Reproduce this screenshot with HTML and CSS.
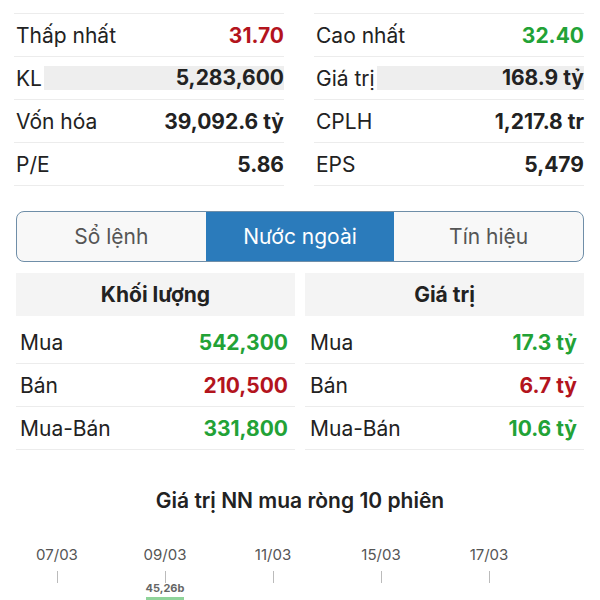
FILE: index.html
```html
<!DOCTYPE html>
<html lang="vi">
  <head>
    <meta charset="UTF-8" />
    <meta name="viewport" content="width=device-width, initial-scale=1.0" />
    <title>Thông tin cổ phiếu</title>
    <link rel="stylesheet" href="styles.css">
  </head>
  <body>
    <!-- Bảng thống kê giá -->
    <div class="stats">
      <div class="stats-col">
        <div class="row"><span class="label">Tham chiếu</span><span class="value ref">32.15</span></div>
        <div class="row"><span class="label">Thấp nhất</span><span class="value down">31.70</span></div>
        <div class="row"><span class="label">KL</span><span class="value bar">5,283,600</span></div>
        <div class="row"><span class="label">Vốn hóa</span><span class="value">39,092.6 tỷ</span></div>
        <div class="row"><span class="label">P/E</span><span class="value">5.86</span></div>
      </div>
      <div class="stats-col">
        <div class="row"><span class="label">Mở cửa</span><span class="value down">32.00</span></div>
        <div class="row"><span class="label">Cao nhất</span><span class="value up">32.40</span></div>
        <div class="row"><span class="label">Giá trị</span><span class="value bar">168.9 tỷ</span></div>
        <div class="row"><span class="label">CPLH</span><span class="value">1,217.8 tr</span></div>
        <div class="row"><span class="label">EPS</span><span class="value">5,479</span></div>
      </div>
    </div>

    <!-- Tab chọn -->
    <div class="tabs">
      <div class="tab">Sổ lệnh</div>
      <div class="tab active">Nước ngoài</div>
      <div class="tab">Tín hiệu</div>
    </div>

    <!-- Giao dịch nước ngoài -->
    <div class="foreign">
      <div class="foreign-col left">
        <div class="foreign-head">Khối lượng</div>
        <div class="row"><span class="label">Mua</span><span class="value up">542,300</span></div>
        <div class="row"><span class="label">Bán</span><span class="value down">210,500</span></div>
        <div class="row"><span class="label">Mua-Bán</span><span class="value up">331,800</span></div>
      </div>
      <div class="foreign-col right">
        <div class="foreign-head">Giá trị</div>
        <div class="row"><span class="label">Mua</span><span class="value up">17.3 tỷ</span></div>
        <div class="row"><span class="label">Bán</span><span class="value down">6.7 tỷ</span></div>
        <div class="row"><span class="label">Mua-Bán</span><span class="value up">10.6 tỷ</span></div>
      </div>
    </div>

    <!-- Biểu đồ -->
    <div class="chart">
      <h3 class="chart-title">Giá trị NN mua ròng 10 phiên</h3>
      <div class="axis">
        <div class="tick"><span class="date">07/03</span><span class="mark"></span></div>
        <div class="tick"><span class="date">09/03</span><span class="mark"></span><span class="bar-label">45,26b</span><span class="bar-top"></span></div>
        <div class="tick"><span class="date">11/03</span><span class="mark"></span></div>
        <div class="tick"><span class="date">15/03</span><span class="mark"></span></div>
        <div class="tick"><span class="date">17/03</span><span class="mark"></span></div>
      </div>
    </div>
  </body>
</html>
```

FILE: styles.css
```css
body {
  font-family: Inter, "Noto Sans", sans-serif;
  margin: 0;
  padding: 0;
  background-color: #fff;
  color: #222;
  overflow: hidden;
}

/* bảng thống kê */
.stats {
  display: grid;
  grid-template-columns: 270px 270px;
  column-gap: 30px;
  padding: 0 16px 0 14px;
  margin-top: -28px;
}

.stats .row:first-child {
  height: 41px;
}

.row {
  display: flex;
  align-items: center;
  justify-content: space-between;
  height: 42px;
  border-bottom: 1px solid #ececec;
  font-size: 21px;
}

.stats .row .label {
  padding-left: 2px;
}

.value {
  font-weight: 700;
  text-align: right;
}

.value.bar {
  flex: 1;
  height: 24px;
  line-height: 24px;
  margin-left: 2px;
  background-color: #eeeeee;
}

.up {
  color: #22a236;
}

.down {
  color: #b3141d;
}

.ref {
  color: #e3c534;
}

/* tab */
.tabs {
  display: flex;
  margin: 25px 16px 0;
  height: 49px;
  border: 1px solid #6f8ea8;
  border-radius: 8px;
  overflow: hidden;
  background-color: #f8f8f8;
}

.tab {
  flex: 1;
  display: flex;
  align-items: center;
  justify-content: center;
  font-size: 21px;
  color: #555;
}

.tab.active {
  background-color: #2b7bbb;
  color: #fff;
}

/* nước ngoài */
.foreign {
  display: grid;
  grid-template-columns: 1fr 1fr;
  column-gap: 10px;
  padding: 0 16px;
  margin-top: 11px;
}

.foreign-head {
  height: 43px;
  display: flex;
  align-items: center;
  justify-content: center;
  background-color: #f4f4f4;
  font-size: 21px;
  font-weight: 700;
  margin-bottom: 5px;
}

.foreign-col.left .row {
  padding: 0 7px 0 4px;
}

.foreign-col.right .row {
  padding: 0 7px 0 5px;
}

/* biểu đồ */
.chart {
  margin-top: 38px;
}

.chart-title {
  margin: 0;
  text-align: center;
  font-size: 21px;
  font-weight: 600;
  color: #222;
}

.axis {
  display: flex;
  padding-left: 3px;
  margin-top: 32px;
}

.tick {
  width: 108px;
  display: flex;
  flex-direction: column;
  align-items: center;
}

.date {
  font-size: 15px;
  color: #555;
}

.mark {
  width: 1px;
  height: 12px;
  margin-top: 7px;
  background-color: #bbb;
}

.bar-label {
  font-size: 11px;
  font-weight: 700;
  color: #666;
  margin-top: -2px;
}

.bar-top {
  width: 38px;
  height: 6px;
  margin-top: 2px;
  background-color: #8fd39a;
}
```
